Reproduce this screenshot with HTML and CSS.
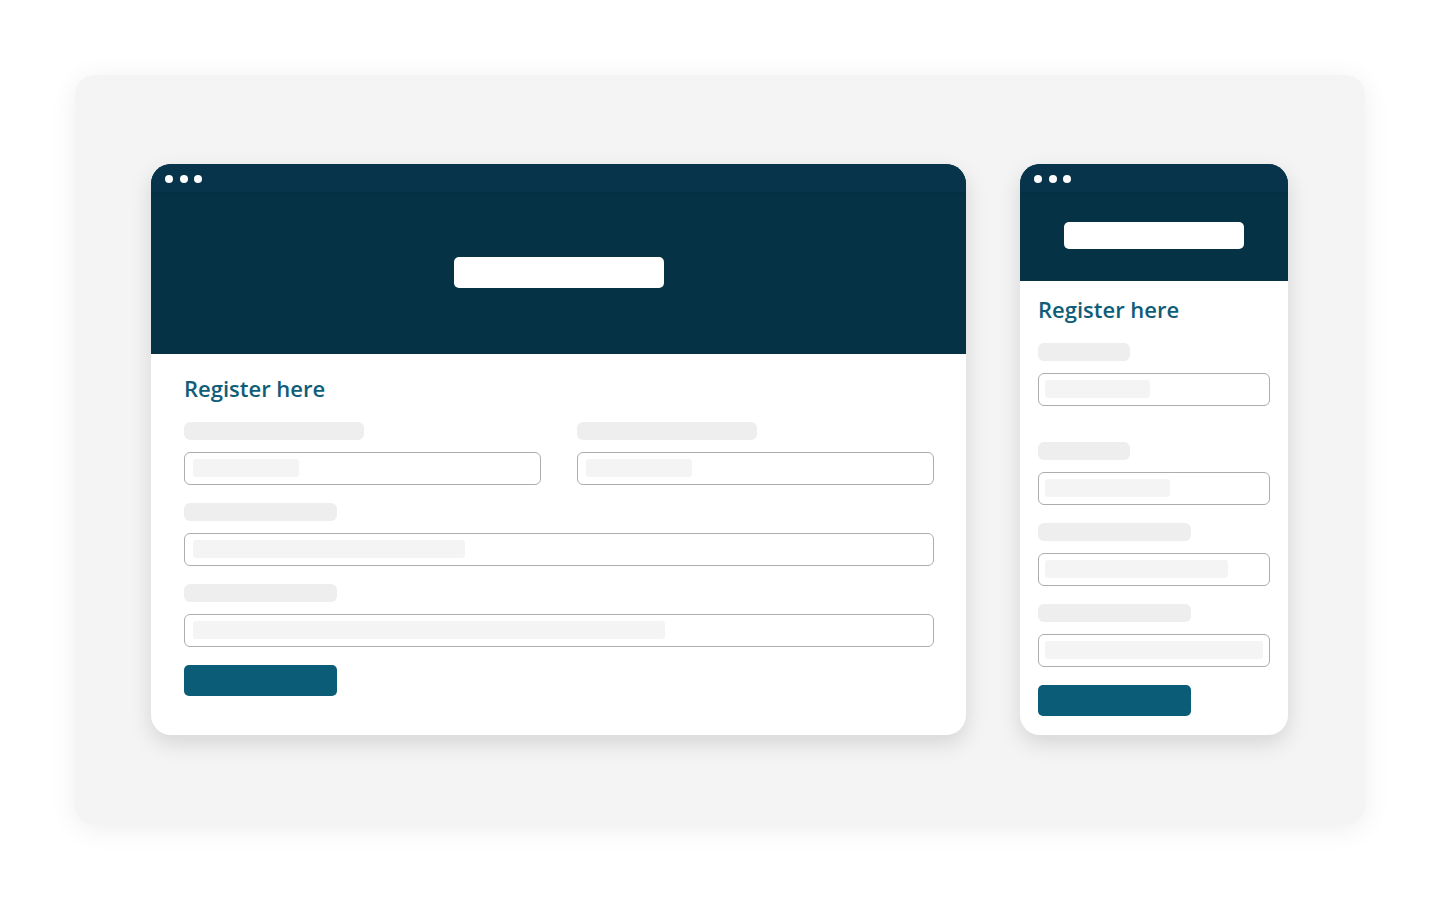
FILE: index.html
```html
<!DOCTYPE html>
<html lang="en">
<head>
<meta charset="utf-8">
<title>Register here</title>
<link rel="stylesheet" href="styles.css">
</head>
<body>
<div class="stage">
  <div class="panel">
    <div class="window desktop">
      <div class="header">
        <div class="topbar"><span class="dot"></span><span class="dot"></span><span class="dot"></span></div>
        <div class="pill"></div>
      </div>
      <div class="body">
        <h1 class="title">Register here</h1>
        <div class="row two">
          <div class="field">
            <div class="label w180"></div>
            <div class="input"><div class="ph" style="width:106px"></div></div>
          </div>
          <div class="field">
            <div class="label w180"></div>
            <div class="input"><div class="ph" style="width:106px"></div></div>
          </div>
        </div>
        <div class="field">
          <div class="label w153"></div>
          <div class="input"><div class="ph" style="width:272px"></div></div>
        </div>
        <div class="field">
          <div class="label w153"></div>
          <div class="input"><div class="ph" style="width:472px"></div></div>
        </div>
        <div class="button"></div>
      </div>
    </div>

    <div class="window mobile">
      <div class="header">
        <div class="topbar"><span class="dot"></span><span class="dot"></span><span class="dot"></span></div>
        <div class="pill"></div>
      </div>
      <div class="body">
        <h1 class="title">Register here</h1>
        <div class="field spaced">
          <div class="label w92"></div>
          <div class="input"><div class="ph" style="width:105px"></div></div>
        </div>
        <div class="field">
          <div class="label w92"></div>
          <div class="input"><div class="ph" style="width:125px"></div></div>
        </div>
        <div class="field">
          <div class="label w153"></div>
          <div class="input"><div class="ph" style="width:183px"></div></div>
        </div>
        <div class="field">
          <div class="label w153"></div>
          <div class="input"><div class="ph full"></div></div>
        </div>
        <div class="button"></div>
      </div>
    </div>
  </div>
</div>
</body>
</html>
```

FILE: styles.css
```css
* { box-sizing: border-box; }
html, body {
  margin: 0;
  padding: 0;
  background: #ffffff;
  font-family: "Open Sans", "Noto Sans", sans-serif;
}
.stage {
  width: 1440px;
  height: 900px;
  padding: 75px;
}
.panel {
  width: 1290px;
  height: 750px;
  background: #f4f4f4;
  border-radius: 20px;
  box-shadow: 0 4px 28px rgba(0, 0, 0, 0.07);
  display: flex;
  gap: 54px;
  padding: 89px 0 0 76px;
}
.window {
  background: #ffffff;
  border-radius: 20px;
  overflow: hidden;
  height: 571px;
  box-shadow: 0 8px 22px rgba(0, 0, 0, 0.13);
  display: flex;
  flex-direction: column;
}
.desktop { width: 815px; }
.mobile { width: 268px; }

.header {
  background: #063246;
  display: flex;
  flex-direction: column;
  align-items: center;
}
.desktop .header { height: 190px; }
.mobile .header { height: 117px; }

.topbar {
  align-self: stretch;
  height: 28px;
  background: #07344a;
  box-shadow: 0 2px 3px rgba(0, 0, 0, 0.05);
  display: flex;
  gap: 6.5px;
  padding: 11px 0 0 14px;
}
.dot {
  width: 8px;
  height: 8px;
  border-radius: 50%;
  background: #ffffff;
}
.pill {
  background: #ffffff;
  border-radius: 5px;
}
.desktop .pill { width: 210px; height: 31px; margin-top: 65px; }
.mobile .pill { width: 180px; height: 27px; margin-top: 30px; }

.body {
  display: flex;
  flex-direction: column;
  gap: 18px;
}
.desktop .body { padding: 23px 32px 0 33px; }
.mobile .body { padding: 17px 18px 0 18px; }

.title {
  margin: 0 0 5px 0;
  font-size: 22px;
  line-height: 22px;
  font-weight: 600;
  color: #0f5d78;
  letter-spacing: 0;
}
.row.two {
  display: grid;
  grid-template-columns: 1fr 1fr;
  gap: 36px;
}
.field {
  display: flex;
  flex-direction: column;
  gap: 12px;
}
.field.spaced { margin-bottom: 18px; }
.label {
  height: 18px;
  background: #eeeeee;
  border-radius: 6px;
}
.w180 { width: 180px; }
.w153 { width: 153px; }
.w92 { width: 92px; }
.input {
  height: 33px;
  border: 1px solid #adadad;
  border-radius: 6px;
  background: #ffffff;
  padding: 6px 8px;
}
.mobile .input { padding: 6px 6px; }
.ph {
  height: 18px;
  background: #f4f4f4;
  border-radius: 3px;
}
.ph.full { width: 100%; }
.button {
  width: 153px;
  height: 31px;
  background: #0a5c77;
  border-radius: 5px;
}
```
